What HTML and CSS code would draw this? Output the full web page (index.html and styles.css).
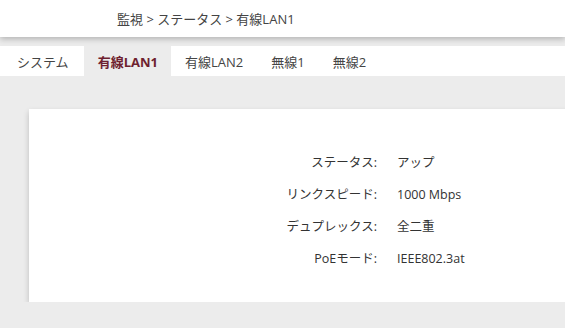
FILE: index.html
```html
<!DOCTYPE html>
<html lang="ja">
<head>
    <meta charset="UTF-8">
    <meta name="viewport" content="width=device-width, initial-scale=1.0">
    <title>有線LAN1</title>
    <link rel="stylesheet" href="styles.css">
</head>
<body>
    <header class="top-bar">
        <div class="breadcrumb">監視 &gt; ステータス &gt; 有線LAN1</div>
    </header>
    <nav class="tabs">
        <a class="tab">システム</a>
        <a class="tab active">有線LAN1</a>
        <a class="tab">有線LAN2</a>
        <a class="tab">無線1</a>
        <a class="tab">無線2</a>
    </nav>
    <main class="content">
        <div class="card">
            <dl class="status-list">
                <dt>ステータス:</dt><dd>アップ</dd>
                <dt>リンクスピード:</dt><dd>1000 Mbps</dd>
                <dt>デュプレックス:</dt><dd>全二重</dd>
                <dt>PoEモード:</dt><dd>IEEE802.3at</dd>
            </dl>
        </div>
    </main>
</body>
</html>
```

FILE: styles.css
```css
body {
    font-family: 'Open Sans', 'Noto Sans CJK JP', sans-serif;
    background: #ececec;
    margin: 0;
    color: #333;
    overflow: hidden;
}

.top-bar {
    background: #fff;
    height: 37px;
    box-shadow: 0 2px 6px rgba(0, 0, 0, 0.25);
    display: flex;
    align-items: center;
    position: relative;
    z-index: 1;
}

.breadcrumb {
    padding-left: 117px;
    font-size: 13px;
    color: #444;
}

.tabs {
    margin-top: 9px;
    background: #fff;
    height: 30px;
    display: flex;
}

.tab {
    display: flex;
    align-items: center;
    padding: 0 15px 0 17px;
    font-size: 13px;
    color: #444;
}

.tab + .tab {
    padding: 0 14px 0 14px;
}

.tab.active {
    background: #ececec;
    color: #6e1f2f;
    font-weight: bold;
    padding-right: 13px;
}

.content {
    padding: 33px 0 0 29px;
}

.card {
    background: #fff;
    height: 193px;
    margin-right: -20px;
    box-shadow: 0 3px 6px rgba(0, 0, 0, 0.2);
    box-sizing: border-box;
    padding-top: 44px;
}

.status-list {
    display: grid;
    grid-template-columns: 348px auto;
    column-gap: 20px;
    row-gap: 12.5px;
    margin: 0;
    font-size: 12.5px;
    line-height: 19.5px;
}

.status-list dt {
    text-align: right;
}

.status-list dd {
    margin: 0;
}
```
